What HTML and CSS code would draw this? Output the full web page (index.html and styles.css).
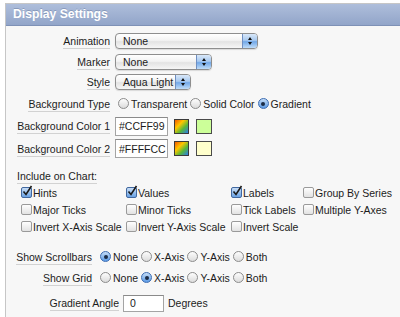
FILE: index.html
```html
<!DOCTYPE html>
<html lang="en">
<head>
    <meta charset="UTF-8">
    <title>Display Settings</title>
    <link rel="stylesheet" href="styles.css">
</head>
<body>

<div class="panel">
    <div class="panel-head">Display Settings</div>

    <div class="form">
        <div class="row">
            <div class="label"><span>Animation</span></div>
            <div class="select sel-anim"><span class="select-text">None</span><span class="select-btn"><svg width="14" height="14" viewBox="0 0 14 14"><path d="M5 6h4l-2-3z M5 8h4l-2 3z" fill="#111"/></svg></span></div>
        </div>
        <div class="row">
            <div class="label"><span>Marker</span></div>
            <div class="select sel-marker"><span class="select-text">None</span><span class="select-btn"><svg width="14" height="14" viewBox="0 0 14 14"><path d="M5 6h4l-2-3z M5 8h4l-2 3z" fill="#111"/></svg></span></div>
        </div>
        <div class="row">
            <div class="label"><span>Style</span></div>
            <div class="select sel-style"><span class="select-text">Aqua Light</span><span class="select-btn"><svg width="14" height="14" viewBox="0 0 14 14"><path d="M5 6h4l-2-3z M5 8h4l-2 3z" fill="#111"/></svg></span></div>
        </div>
        <div class="row tall">
            <div class="label"><span>Background Type</span></div>
            <div class="options first">
                <span class="radio"></span><span class="opt">Transparent</span>
                <span class="radio"></span><span class="opt">Solid Color</span>
                <span class="radio on"></span><span class="opt">Gradient</span>
            </div>
        </div>
        <div class="row tall">
            <div class="label"><span>Background Color 1</span></div>
            <div class="text-input color-input">#CCFF99</div>
            <span class="picker"></span>
            <span class="swatch swatch-1"></span>
        </div>
        <div class="row tall">
            <div class="label"><span>Background Color 2</span></div>
            <div class="text-input color-input">#FFFFCC</div>
            <span class="picker"></span>
            <span class="swatch swatch-2"></span>
        </div>

        <div class="include"><span>Include on Chart:</span></div>
        <div class="checks">
            <div class="check"><span class="box on"><svg width="13" height="13" viewBox="0 0 13 13"><path d="M2.5 6.5 L5 9.5 L10.5 1" fill="none" stroke="#1a1a1a" stroke-width="1.6"/></svg></span>Hints</div>
            <div class="check"><span class="box on"><svg width="13" height="13" viewBox="0 0 13 13"><path d="M2.5 6.5 L5 9.5 L10.5 1" fill="none" stroke="#1a1a1a" stroke-width="1.6"/></svg></span>Values</div>
            <div class="check"><span class="box on"><svg width="13" height="13" viewBox="0 0 13 13"><path d="M2.5 6.5 L5 9.5 L10.5 1" fill="none" stroke="#1a1a1a" stroke-width="1.6"/></svg></span>Labels</div>
            <div class="check"><span class="box"></span>Group By Series</div>
            <div class="check"><span class="box"></span>Major Ticks</div>
            <div class="check"><span class="box"></span>Minor Ticks</div>
            <div class="check"><span class="box"></span>Tick Labels</div>
            <div class="check"><span class="box"></span>Multiple Y-Axes</div>
            <div class="check"><span class="box"></span>Invert X-Axis Scale</div>
            <div class="check"><span class="box"></span>Invert Y-Axis Scale</div>
            <div class="check"><span class="box"></span>Invert Scale</div>
        </div>

        <div class="row mid first-mid">
            <div class="label short"><span>Show Scrollbars</span></div>
            <div class="options">
                <span class="radio on"></span><span class="opt">None</span>
                <span class="radio"></span><span class="opt">X-Axis</span>
                <span class="radio"></span><span class="opt">Y-Axis</span>
                <span class="radio"></span><span class="opt">Both</span>
            </div>
        </div>
        <div class="row mid">
            <div class="label short"><span>Show Grid</span></div>
            <div class="options">
                <span class="radio"></span><span class="opt">None</span>
                <span class="radio on"></span><span class="opt">X-Axis</span>
                <span class="radio"></span><span class="opt">Y-Axis</span>
                <span class="radio"></span><span class="opt">Both</span>
            </div>
        </div>
        <div class="row angle">
            <div class="label angle-label"><span>Gradient Angle</span></div>
            <div class="text-input angle-input">0</div>
            <span class="unit">Degrees</span>
        </div>
    </div>
</div>

</body>
</html>
```

FILE: styles.css
```css
body {
    margin: 0;
    background: #fff;
    font-family: "Liberation Sans", Arial, sans-serif;
    font-size: 10.5px;
    color: #1c1c1c;
    overflow: hidden;
}
.panel {
    margin: 3px 0 0 5px;
    border-left: 1px solid #c6c6c6;
    border-top: 1px solid #c6c6c6;
    background: #f7f7f7;
    height: 313px;
}
.panel-head {
    height: 21px;
    line-height: 21px;
    padding-left: 7px;
    background: linear-gradient(#aebedb, #92a5c9);
    border-bottom: 1px solid #7e91b6;
    color: #fff;
    font-weight: bold;
    font-size: 12.2px;
    text-shadow: 0 -1px 0 rgba(60, 80, 120, 0.3);
}
.form {
    padding-top: 5px;
}
.row {
    display: flex;
    align-items: center;
    height: 20.5px;
}
.row.tall {
    height: 22.5px;
}
.label {
    width: 104px;
    margin-right: 5px;
    text-align: right;
    flex-shrink: 0;
}
.label span,
.include span {
    border-bottom: 1px solid #d2d2d2;
    padding-bottom: 1px;
}
.label.short {
    width: 86px;
}
.label.angle-label {
    width: 113px;
    margin-right: 4px;
}

/* popup menus */
.select {
    display: flex;
    align-items: center;
    box-sizing: border-box;
    height: 16px;
    border: 1px solid #8e8e8e;
    border-radius: 4px;
    background: linear-gradient(#fff, #f3f3f3 45%, #e3e3e3 55%, #f6f6f6);
    box-shadow: 0 1px 1px rgba(0, 0, 0, 0.12);
    overflow: hidden;
}
.sel-anim { width: 143px; }
.sel-marker { width: 97px; }
.sel-style { width: 76px; }
.select-text {
    padding-left: 7px;
    flex: 1;
}
.select-btn {
    display: flex;
    align-items: center;
    justify-content: center;
    width: 14px;
    height: 100%;
    border-left: 1px solid #6f8fc2;
    background: linear-gradient(#d9e8f9, #a8c9ef 45%, #72a8e8 55%, #bfdcf8);
}

/* radios */
.options {
    display: flex;
    align-items: center;
    margin-left: 3px;
}
.radio {
    box-sizing: border-box;
    width: 11px;
    height: 11px;
    border-radius: 50%;
    border: 1px solid #8c8c8c;
    background: linear-gradient(#fdfdfd, #dcdcdc);
    margin-right: 2px;
    display: flex;
    align-items: center;
    justify-content: center;
    flex-shrink: 0;
}
.radio.on {
    border-color: #3c6cb2;
    background: linear-gradient(#c4dcf7, #5c9be6);
}
.radio.on::after {
    content: "";
    width: 4px;
    height: 4px;
    border-radius: 50%;
    background: #1b2b45;
}
.opt {
    margin-right: 3px;
}

/* inputs */
.text-input {
    box-sizing: border-box;
    background: #fff;
    border: 1px solid #a4a4a4;
    border-top-color: #8a8a8a;
    padding-left: 3px;
    display: flex;
    align-items: center;
}
.color-input {
    width: 53px;
    height: 19px;
}
.picker {
    box-sizing: border-box;
    width: 15px;
    height: 15px;
    margin-left: 6px;
    border: 1px solid #3a3a3a;
    background: linear-gradient(to bottom right, #f25a00, #ffc600 35%, #58b838 65%, #2a7cf0);
}
.swatch {
    box-sizing: border-box;
    width: 16px;
    height: 15px;
    margin-left: 7px;
    border: 1px solid #4a4a4a;
}
.swatch-1 { background: #ccff99; }
.swatch-2 { background: #ffffcc; }

/* include on chart */
.include {
    margin-top: 8px;
    height: 16px;
    line-height: 16px;
    padding-left: 11px;
}
.checks {
    display: grid;
    grid-template-columns: 105px 105px 72px auto;
    grid-auto-rows: 17px;
    padding-left: 15px;
}
.check {
    display: flex;
    align-items: center;
    white-space: nowrap;
}
.box {
    box-sizing: border-box;
    width: 11px;
    height: 11px;
    margin-right: 1px;
    border: 1px solid #9a9a9a;
    border-radius: 2px;
    background: linear-gradient(#fefefe, #e2e2e2);
    position: relative;
    flex-shrink: 0;
}
.box.on {
    border-color: #41689f;
    background: linear-gradient(#c7ddf6, #6aa2e4);
}
.box svg {
    position: absolute;
    left: -1px;
    top: -3px;
}

.row.mid {
    height: 21px;
}
.row.first-mid {
    margin-top: 11px;
}
.row.angle {
    margin-top: 4px;
    height: 22px;
}
.angle-input {
    width: 41px;
    height: 17px;
    padding-left: 6px;
}
.unit {
    margin-left: 4px;
}
```
